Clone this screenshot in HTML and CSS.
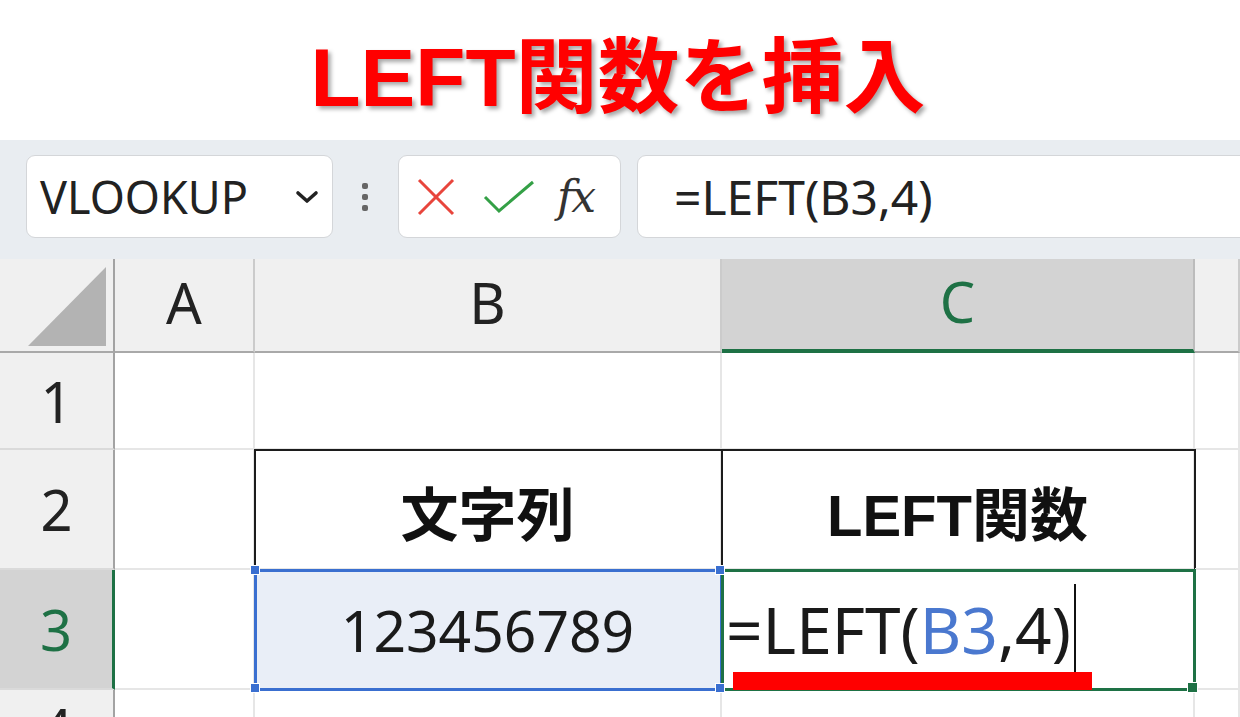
FILE: index.html
```html
<!DOCTYPE html>
<html lang="ja">
<head>
  <meta charset="UTF-8">
  <title>LEFT関数を挿入</title>
  <link rel="stylesheet" href="styles.css">
</head>
<body>

  <div class="title">LEFT関数を挿入</div>

  <div class="toolbar">
    <div class="name-box">
      <span>VLOOKUP</span>
      <svg class="chevron" width="26" height="16" viewBox="0 0 26 16">
        <polyline points="4,4 13,12 22,4" fill="none" stroke="#222" stroke-width="3.6" stroke-linecap="round" stroke-linejoin="round"/>
      </svg>
    </div>
    <div class="grip"><i></i><i></i><i></i></div>
    <div class="fx-box">
      <svg width="40" height="38" viewBox="0 0 40 38">
        <line x1="3" y1="2" x2="37" y2="36" stroke="#e8453c" stroke-width="3"/>
        <line x1="37" y1="2" x2="3" y2="36" stroke="#e8453c" stroke-width="3"/>
      </svg>
      <svg class="check" width="52" height="34" viewBox="0 0 52 34">
        <polyline points="2,17 16,31 50,2" fill="none" stroke="#34a046" stroke-width="3"/>
      </svg>
      <span class="fx">fx</span>
    </div>
    <div class="formula">=LEFT(B3,4)</div>
  </div>

  <div class="sheet">
    <!-- header row -->
    <div class="hd corner"><svg width="80" height="80" viewBox="0 0 80 80"><polygon points="78,0 78,79 0,79" fill="#b3b3b3"/></svg></div>
    <div class="hd col">A</div>
    <div class="hd col">B</div>
    <div class="hd col active">C</div>
    <div class="hd col"></div>

    <!-- row 1 -->
    <div class="hd row">1</div>
    <div class="cell"></div>
    <div class="cell"></div>
    <div class="cell"></div>
    <div class="cell"></div>

    <!-- row 2 -->
    <div class="hd row">2</div>
    <div class="cell"></div>
    <div class="cell boxed bold">文字列</div>
    <div class="cell boxed bold">LEFT関数</div>
    <div class="cell"></div>

    <!-- row 3 -->
    <div class="hd row active">3</div>
    <div class="cell"></div>
    <div class="cell ref">
      123456789
      <i class="handle tl"></i><i class="handle tr"></i><i class="handle bl"></i><i class="handle br"></i>
    </div>
    <div class="cell editing">
      <span>=LEFT(<span class="ref-text">B3</span>,4)</span><span class="caret"></span>
      <i class="fill-handle"></i>
      <div class="marker"></div>
    </div>
    <div class="cell"></div>

    <!-- row 4 -->
    <div class="hd row">4</div>
    <div class="cell"></div>
    <div class="cell"></div>
    <div class="cell"></div>
    <div class="cell"></div>
  </div>

</body>
</html>
```

FILE: styles.css
```css
* {
  box-sizing: border-box;
}

body {
  margin: 0;
  width: 1240px;
  height: 717px;
  overflow: hidden;
  background: #fff;
  font-family: 'Noto Sans', 'Noto Sans CJK JP', sans-serif;
  color: #222;
}

.title {
  height: 140px;
  display: flex;
  align-items: center;
  justify-content: center;
  font-family: 'Liberation Sans', 'Noto Sans CJK JP', sans-serif;
  font-weight: bold;
  font-size: 82px;
  color: #ff0000;
  text-shadow: 3px 3px 4px rgba(0, 0, 0, 0.35);
  padding-right: 4px;
}

/* formula bar */
.toolbar {
  height: 119px;
  background: #e9edf1;
  display: flex;
  align-items: flex-start;
  padding: 15px 0 0 26px;
}

.name-box,
.fx-box,
.formula {
  height: 83px;
  background: #fff;
  border: 1px solid #d4d6d9;
  border-radius: 9px;
  display: flex;
  align-items: center;
}

.name-box {
  width: 307px;
  padding: 0 12px 0 13px;
  justify-content: space-between;
  font-size: 45px;
  color: #222;
}

.grip {
  width: 6px;
  margin: 0 30px 0 29px;
  height: 83px;
  display: flex;
  flex-direction: column;
  justify-content: center;
  gap: 5px;
}

.grip i {
  width: 6px;
  height: 6px;
  border-radius: 2px;
  background: #666;
}

.fx-box {
  width: 223px;
  padding-left: 17px;
}

.fx-box .check {
  margin-left: 27px;
}

.fx {
  margin-left: 22px;
  font-family: 'DejaVu Serif', 'Liberation Serif', serif;
  font-style: italic;
  font-size: 44px;
  color: #333;
  letter-spacing: -2px;
}

.formula {
  flex: 1;
  margin: 0 -20px 0 16px;
  padding-left: 36px;
  font-size: 48px;
  color: #222;
}

/* sheet */
.sheet {
  display: grid;
  grid-template-columns: 115px 140px 467px 473px 1fr;
  grid-template-rows: 94px 97px 120px 120px 1fr;
  height: 458px;
}

.hd {
  background: #f0f0f0;
  display: flex;
  align-items: center;
  justify-content: center;
  font-size: 56px;
  color: #222;
}

.hd.col {
  border-right: 2px solid #cbcbcb;
  border-bottom: 2px solid #a9a9a9;
  padding-bottom: 6px;
}

.hd.corner {
  border-right: 2px solid #a3a3a3;
  border-bottom: 2px solid #a9a9a9;
  justify-content: flex-end;
  align-items: flex-end;
  padding: 0 5px 4px 0;
}

.hd.row {
  border-right: 2px solid #a3a3a3;
  border-bottom: 2px solid #dadada;
}

.hd.active {
  background: #d3d3d3;
  color: #1e7145;
}

.hd.col.active {
  border-bottom: 4px solid #1e7145;
  border-right-color: #bcbcbc;
}

.hd.row.active {
  border-right: 3px solid #1e7145;
}

.cell {
  border-right: 2px solid #e6e6e6;
  border-bottom: 2px solid #e6e6e6;
  display: flex;
  align-items: center;
  justify-content: center;
  font-size: 58px;
  color: #1a1a1a;
}

.cell.bold {
  font-family: 'Liberation Sans', 'Noto Sans CJK JP', sans-serif;
  font-weight: bold;
  font-size: 58px;
  color: #111;
  padding-top: 4px;
}

.cell.boxed {
  outline: 2px solid #1c1c1c;
  outline-offset: -1px;
}

.cell.ref {
  position: relative;
  background: #e9eef7;
  outline: 3px solid #3a6fd0;
  outline-offset: -2px;
  font-size: 57px;
  padding-top: 2px;
}

.cell.editing {
  position: relative;
  justify-content: flex-start;
  padding-left: 4px;
  outline: 3px solid #1e7145;
  outline-offset: -2px;
  font-size: 64px;
}

.ref-text {
  color: #4a78cf;
}

.caret {
  display: inline-block;
  width: 2px;
  height: 90px;
  background: #111;
  margin-left: 3px;
  align-self: flex-start;
  margin-top: 14px;
}

.handle,
.fill-handle {
  position: absolute;
  z-index: 2;
  width: 10px;
  height: 10px;
  background: #3a6fd0;
  border: 1px solid #fff;
}

.handle.tl { left: -5px; top: -5px; }
.handle.tr { right: -5px; top: -5px; }
.handle.bl { left: -5px; bottom: -5px; }
.handle.br { right: -5px; bottom: -5px; }

.fill-handle {
  width: 11px;
  height: 11px;
  background: #1e7145;
  right: -5px;
  bottom: -5px;
}

.marker {
  position: absolute;
  z-index: 1;
  left: 11px;
  bottom: -2px;
  width: 359px;
  height: 18px;
  background: #ff0000;
}
```
